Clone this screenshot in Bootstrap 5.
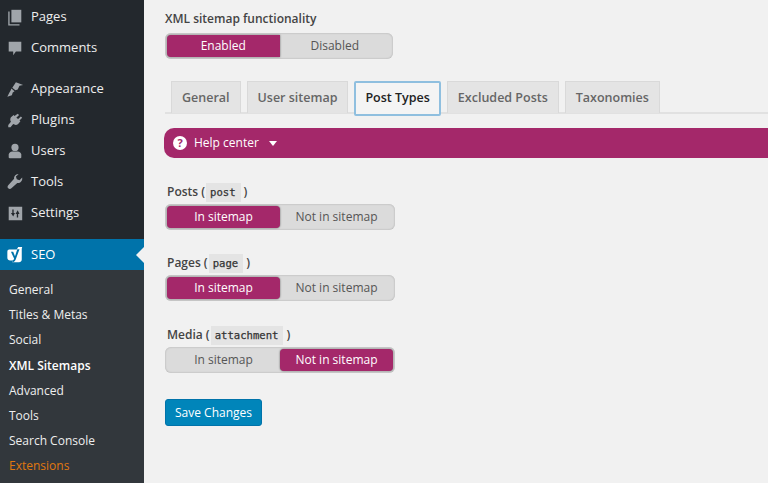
<!DOCTYPE html>
<html lang="en"><head><meta charset="utf-8"><title>XML Sitemaps</title>
<link href="https://cdn.jsdelivr.net/npm/bootstrap@5.3.0/dist/css/bootstrap.min.css" rel="stylesheet">
<style>
html,body{height:483px;overflow:hidden}
body{font-family:"Open Sans",sans-serif;font-size:12px;background:#f1f1f1;color:#444}
.wp-shell{height:483px}
.wp-side{width:144px;flex:none;background:#23282d;color:#eee;overflow:hidden}
.wp-item{height:31px;padding-left:6px;gap:7px;font-size:13px;color:#eee;text-decoration:none;line-height:31px}
.wp-item svg{width:18px;height:18px;flex:none;fill:#a0a5aa}
.wp-gap{height:10px}
.wp-first{margin-top:1px}
.wp-seo{background:#0073aa;color:#fff;margin-top:11px;position:relative}
.wp-seo svg{fill:#fff}
.wp-seo::after{content:"";position:absolute;right:0;top:8px;border:8px solid transparent;border-right-color:#f1f1f1;border-left:0}
.wp-sub{background:#32373c;padding-top:7px;height:213px}
.wp-sub a{display:block;height:25.2px;line-height:25px;padding-left:9px;font-size:12px;color:#b4b9be;text-decoration:none}
.wp-sub a.wp-on{color:#fff;font-weight:600}
.wp-sub a.wp-ext{color:#e0780f}
.wp-main{flex:1;min-width:0;padding-left:21px;padding-top:10px}
.wp-label{font-size:12px;font-weight:600;color:#444;line-height:18px}
.wp-toggle{display:inline-flex;background:#dbdbdb;border-radius:6px;padding:2px;box-shadow:inset 0 0 2px rgba(0,0,0,.25)}
.wp-toggle .btn{height:22px;border:0;padding:0;font-size:12px;line-height:22px;border-radius:4px;color:#555;background:transparent}
.wp-toggle .btn.wp-sel{background:#a4286a;color:#fff;box-shadow:0 0 2px rgba(0,0,0,.6)}
.wp-w1 .btn{width:112px}
.wp-w2 .btn{width:113px}
.wp-w1{width:228px;height:26px;margin-top:5px}
.wp-w2{width:230px;height:26px;margin-top:2px;display:flex}
.wp-tabs{margin-top:22px;height:33px;padding-left:6px;gap:6px;border-bottom:2px solid #e1e1e1;flex-wrap:nowrap}
.wp-tabs .nav-link{height:32px;padding:0 10px;line-height:32px;font-size:12.5px;font-weight:600;color:#666;background:#e4e4e4;border:1px solid #d9d9d9;border-bottom:0;border-radius:0;white-space:nowrap}
.wp-tabs .nav-link.wp-act{height:35px;line-height:30px;color:#222;background:#f4f4f4;border:2px solid #8fbfdf;border-radius:2px;padding:0 9px}
.wp-help{margin-top:14px;margin-left:-1px;height:30px;background:#a4286a;color:#fff;border-radius:10px 0 0 10px;padding-left:9px;font-size:12px;gap:7px}
.wp-help svg{width:14px;height:14px;flex:none}
.wp-caret{width:0;height:0;border:4px solid transparent;border-top:5px solid #fff;border-bottom:0;margin-left:3px}
.wp-field .wp-label{line-height:20px;display:flex;align-items:center;padding-left:2px}
.wp-field code{background:#e4e4e4;color:#333;-webkit-text-stroke:.25px #333;font-family:"DejaVu Sans Mono",monospace;font-size:10.6px;font-weight:400;padding:3px 5px 3px 4px;margin:0 3px 0 1px;line-height:13px}
.wp-f1{margin-top:24px}
.wp-f2{margin-top:23.2px}
.wp-f3{margin-top:24px}
.wp-save{margin-top:26px;height:27px;width:97px;padding:0;font-size:12px;line-height:25px;background:#0085ba;border:1px solid #0073aa;border-radius:3px;color:#fff;display:block;margin-left:0}
</style></head>
<body>
<div class="d-flex wp-shell">
 <nav class="wp-side d-flex flex-column">
  <a class="wp-item wp-first d-flex align-items-center"><svg viewBox="0 0 20 20"><path d="M6 2h11v14H6z"/><path d="M4 4v14h11v1.500H2.500V4z"/></svg>Pages</a>
  <a class="wp-item d-flex align-items-center"><svg viewBox="0 0 20 20"><path d="M3 3h14v11h-6l-3 4v-4H3z"/></svg>Comments</a>
  <div class="wp-gap"></div>
  <a class="wp-item d-flex align-items-center"><svg viewBox="0 0 20 20"><path d="M11 2.500l8 3-4 1-2 4-2.500 1L7 8.500z"/><path d="M6 9.500l3.500 3-2 1.500-1 3-5 1.500 2-4 1.500-2.500z"/></svg>Appearance</a>
  <a class="wp-item d-flex align-items-center"><svg viewBox="0 0 20 20"><path d="M13 3l1.500 1.500-3 3 2 1.500 3-3L18 7.500l-3 3 1 1-2.500 3c-2 1.500-4 1-5.500 0L5 18H2.500v-2.500L5.500 12c-1-1.500-1-3.500 0-5l3-2.500 1 1z"/></svg>Plugins</a>
  <a class="wp-item d-flex align-items-center"><svg viewBox="0 0 20 20"><circle cx="10" cy="6" r="4"/><path d="M3 17v-3c0-2 2-3.500 4-3.500h6c2 0 4 1.500 4 3.500v3c0 .6-.5 1-1 1H4c-.5 0-1-.4-1-1z"/></svg>Users</a>
  <a class="wp-item d-flex align-items-center"><svg viewBox="0 0 20 20"><path d="M18 5l-3 3-3-1-1-3 3-2.500c-2.500-.5-5.500 1.500-5 5L2.500 13.500c-1 1-1 2.500 0 3.500s2.500 1 3.500 0l6.500-6c3 .5 6-2 5.500-5.500z"/></svg>Tools</a>
  <a class="wp-item d-flex align-items-center"><svg viewBox="0 0 20 20"><path fill-rule="evenodd" d="M3 3h15v15H3zM7 6v4H5.500L8 14l2-4H8.500V6zm5 9h1.500v-4H15l-2-4-2.500 4H12z"/></svg>Settings</a>
  <a class="wp-item wp-seo d-flex align-items-center"><svg viewBox="0 0 20 20"><path d="M3.500 4H12L13.500 1H18l-.5 2v12c0 2-1.500 3-3 3H7l1-2H4.500C3 16 1.500 15 1.500 13V6.500C1.500 5 2.500 4 3.500 4z"/><path d="M5.500 6.500H8l2 5 2.500-8h2.500l-4 11c-.5 1.500-1.500 3-3.500 3.500v-2c1-.5 1.500-1 1.500-2z" fill="#0073aa"/></svg>SEO</a>
  <div class="wp-sub">
   <a>General</a><a>Titles &amp; Metas</a><a>Social</a><a class="wp-on">XML Sitemaps</a><a>Advanced</a><a>Tools</a><a>Search Console</a><a class="wp-ext">Extensions</a>
  </div>
 </nav>
 <main class="wp-main">
  <div class="wp-label">XML sitemap functionality</div>
  <div class="wp-toggle wp-w1 btn-group"><button class="btn wp-sel">Enabled</button><button class="btn">Disabled</button></div>
  <ul class="nav wp-tabs">
   <li><a class="nav-link">General</a></li><li><a class="nav-link">User sitemap</a></li><li><a class="nav-link wp-act">Post Types</a></li><li><a class="nav-link">Excluded Posts</a></li><li><a class="nav-link">Taxonomies</a></li>
  </ul>
  <div class="wp-help d-flex align-items-center"><svg viewBox="0 0 14 14"><circle cx="7" cy="7" r="7" fill="#fff"/><text x="7" y="11" text-anchor="middle" font-size="11" font-weight="700" font-family="Open Sans" fill="#a4286a">?</text></svg><span>Help center</span><span class="wp-caret"></span></div>
  <div class="wp-field wp-f1"><div class="wp-label">Posts (<code>post</code>)</div>
   <div class="wp-toggle wp-w2"><button class="btn wp-sel">In sitemap</button><button class="btn">Not in sitemap</button></div></div>
  <div class="wp-field wp-f2"><div class="wp-label">Pages (<code>page</code>)</div>
   <div class="wp-toggle wp-w2"><button class="btn wp-sel">In sitemap</button><button class="btn">Not in sitemap</button></div></div>
  <div class="wp-field wp-f3"><div class="wp-label">Media (<code>attachment</code>)</div>
   <div class="wp-toggle wp-w2"><button class="btn">In sitemap</button><button class="btn wp-sel">Not in sitemap</button></div></div>
  <button class="btn wp-save">Save Changes</button>
 </main>
</div>
</body></html>
